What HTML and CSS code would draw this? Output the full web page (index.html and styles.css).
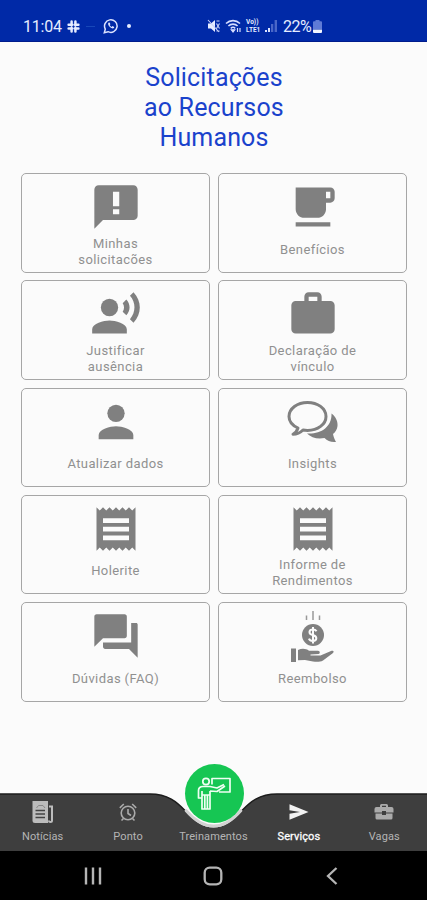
FILE: index.html
```html
<!DOCTYPE html>
<html lang="pt-BR">
<head>
<meta charset="utf-8">
<title>Solicitações ao Recursos Humanos</title>
<link rel="stylesheet" href="styles.css">
</head>
<body>
<div class="phone">
  <header class="status">
    <div class="status-left">
      <span class="clock">11:04</span>
      <svg class="slack" width="13" height="13" viewBox="0 0 13 13" stroke="#e6ecff" stroke-width="2.500" stroke-linecap="round"><path d="M4.600 1.600v3.600M8.400 1.600v3.600M4.600 7.800v3.600M8.400 7.800v3.600M1.600 4.700h3.600M7.800 4.700h3.600M1.600 8.400h3.600M7.800 8.400h3.600"/></svg>
      <span class="dash"></span>
      <svg width="16" height="16" viewBox="0 0 16 16" fill="none" stroke="#dce3ff" stroke-width="1.500"><path d="M1.300 14.700l1-3.600A6.300 6.300 0 1 1 5 13.700z"/><path d="M5.400 4.800c-.9 1.400.3 3.200 1.500 4.300 1.200 1.100 2.900 2 4.100 1l.2-1-1.700-1-.9.8C7.600 8.500 7 7.900 6.700 7.100l.7-.8-.8-1.700z" fill="#dce3ff" stroke="none"/></svg>
      <span class="dot"></span>
    </div>
    <div class="status-right">
      <svg width="14" height="14" viewBox="0 0 14 14" fill="#e6ecff"><path d="M1 4.500h3L8 1v12L4 9.500H1z"/><path d="M9.500 4.500l3 5M12.500 4.500l-3 5M9.500 2h3M9.500 12h3M1 1l11 12" stroke="#c8d2fa" stroke-width="1.100"/></svg>
      <svg class="wifi" width="17" height="14" viewBox="0 0 17 14" fill="none" stroke="#d5ddff" stroke-width="1.600"><path d="M1 4.500C5 .6 11 .6 15 4.500M3.400 7c2.600-2.500 6.600-2.500 9.200 0M5.800 9.300c1.300-1.200 3.100-1.200 4.400 0"/><path d="M8 13l-1.700-2.200h3.400zM12.500 9v4M15 9v4" fill="#d5ddff" stroke-width="1.200"/></svg>
      <span class="volte"><span>Vo))</span><span>LTE1</span></span>
      <svg width="13" height="14" viewBox="0 0 13 14"><path d="M0 13h2v-2H0zM3 13h2V9H3z" fill="#dce3ff"/><path d="M6 13h2.300V5H6zM9.600 13H12V1H9.600z" fill="#4a67c8"/></svg>
      <span class="percent">22%</span>
      <svg width="9" height="13" viewBox="0 0 9 13"><path d="M2.500 0h4v1.200H8q1 0 1 1V9H0V2.200q0-1 1-1h1.500z" fill="#5f7bd6"/><path d="M0 9.500h9V12q0 1-1 1H1q-1 0-1-1z" fill="#f2f5ff"/></svg>
    </div>
  </header>

  <main class="content">
    <h1 class="title">Solicitações<br>ao Recursos<br>Humanos</h1>
    <div class="grid">
      <div class="card">
        <svg class="icon" viewBox="0 0 24 24"><path fill-rule="evenodd" d="M20 2H4c-1.100 0-2 .9-2 2v18l4-4h14c1.100 0 2-.9 2-2V4c0-1.100-.9-2-2-2zM10.600 5v6.600h2.900V5zM10.600 13v2.300h2.900V13z"/></svg>
        <span class="label two">Minhas<br>solicitacões</span>
      </div>
      <div class="card">
        <svg class="icon" viewBox="0 0 24 24"><path d="M20 3H4v10c0 2.210 1.790 4 4 4h6c2.210 0 4-1.790 4-4v-3h2c1.110 0 2-.89 2-2V5c0-1.110-.89-2-2-2zm0 5h-2V5h2v3zM4 21h16v-2H4v2z"/></svg>
        <span class="label">Benefícios</span>
      </div>
      <div class="card">
        <svg class="icon" viewBox="0 0 24 24"><circle cx="9" cy="9" r="4"/><path d="M16.760 5.360l-1.680 1.690c.84 1.180.84 2.710 0 3.890l1.680 1.690c2.020-2.020 2.020-5.070 0-7.270zM20.070 2l-1.630 1.630c2.770 3.020 2.770 7.560 0 10.740L20.070 16c3.900-3.890 3.910-9.950 0-14zM9 15c-2.670 0-8 1.340-8 4v2h16v-2c0-2.660-5.330-4-8-4z"/></svg>
        <span class="label two">Justificar<br>ausência</span>
      </div>
      <div class="card">
        <svg class="icon" viewBox="0 0 24 24"><path d="M20 6h-4V4c0-1.110-.89-2-2-2h-4c-1.110 0-2 .89-2 2v2H4c-1.110 0-2 .89-2 2v11c0 1.110.89 2 2 2h16c1.110 0 2-.89 2-2V8c0-1.110-.89-2-2-2zm-6 0h-4V4h4v2z"/></svg>
        <span class="label two">Declaração de<br>vínculo</span>
      </div>
      <div class="card">
        <svg class="icon" viewBox="0 0 24 24"><circle cx="12" cy="8" r="4"/><path d="M12 14c-2.670 0-8 1.340-8 4v2h16v-2c0-2.660-5.330-4-8-4z"/></svg>
        <span class="label">Atualizar dados</span>
      </div>
      <div class="card">
        <svg class="icon" viewBox="0 0 52 52"><path d="M11 32C10 35 8.500 37 6 38.300c4 0 7.500-1.800 10-4.300q2 .4 4.500.4c10.200 0 18.500-6 18.500-14s-8.300-14-18.500-14S2 12.500 2 20.400c0 4.800 3.500 9 9 11.600z" fill="none" stroke="#808080" stroke-width="3" stroke-linejoin="round"/><path d="M44.500 17.500c4.500 3.500 6.500 8 6 12.500-.4 3.500-2 6-4.500 8 .5 3 1.500 5 3 8-5 .5-8.500-1-11.500-4-7 1.500-13.500-.5-17.500-4.500C33 38.500 45 31.500 44.500 17.500z"/></svg>
        <span class="label">Insights</span>
      </div>
      <div class="card">
        <svg class="icon" viewBox="0 0 24 24"><path d="M18 17.200H6V15h12v2.200zm0-4H6V11h12v2.200zm0-4H6V7h12v2.200zM3 22l1.500-1.500L6 22l1.500-1.500L9 22l1.500-1.500L12 22l1.500-1.500L15 22l1.500-1.500L18 22l1.500-1.500L21 22V2l-1.500 1.500L18 2l-1.500 1.500L15 2l-1.500 1.500L12 2l-1.500 1.500L9 2 7.500 3.500 6 2 4.500 3.500 3 2z"/></svg>
        <span class="label">Holerite</span>
      </div>
      <div class="card">
        <svg class="icon" viewBox="0 0 24 24"><path d="M18 17.200H6V15h12v2.200zm0-4H6V11h12v2.200zm0-4H6V7h12v2.200zM3 22l1.500-1.500L6 22l1.500-1.500L9 22l1.500-1.500L12 22l1.500-1.500L15 22l1.500-1.500L18 22l1.500-1.500L21 22V2l-1.500 1.500L18 2l-1.500 1.500L15 2l-1.500 1.500L12 2l-1.500 1.500L9 2 7.500 3.500 6 2 4.500 3.500 3 2z"/></svg>
        <span class="label two">Informe de<br>Rendimentos</span>
      </div>
      <div class="card">
        <svg class="icon" viewBox="0 0 24 24"><path d="M21.300 6H19v9H6v2c0 .55.45 1 1 1h11l4 4V6.700c0-.4-.3-.7-.7-.7zM17 12V3c0-.55-.45-1-1-1H3c-.55 0-1 .45-1 1v14l4-4h10c.55 0 1-.45 1-1z"/></svg>
        <span class="label">Dúvidas (FAQ)</span>
      </div>
      <div class="card">
        <svg class="icon" viewBox="0 0 52 52"><path d="M19.500 5.500v4.500M26 1v9M32.500 5.500v4.500" stroke="#999" stroke-width="1.500"/><circle cx="26" cy="25" r="11"/><path d="M29.500 21.300c-.7-1.300-2-1.900-3.500-1.900-4.500 0-4.700 4.600-.5 5.500 5.200 1 4.900 6 .3 6-1.800 0-3.300-.8-3.900-2.300M26 17v16.500" fill="none" stroke="#fbfbfb" stroke-width="2"/><path d="M4 38.500h5v13.500H4zM11 40c4-2 8-1.500 11 .7h9c2 0 2.500 2.800.5 3.200l-8 .5v1l10 .2L44 41c2-.9 3.500.4 2 1.900L36 50.500c-3 1.700-7 1.500-10 1l-8-1.500-7 .3z"/></svg>
        <span class="label">Reembolso</span>
      </div>
    </div>
  </main>

  <nav class="tabs">
    <svg class="tabs-bg" width="427" height="58" viewBox="0 0 427 58"><path d="M0 1H150C169 1 178 10 186 18.500 195 29 203 34.500 213.500 34.500S232 29 241 18.500C249 10 258 1 277 1H427V58H0z" fill="#3e3e3e"/><path d="M0 1H150C168 1 177 9 185 17.500M242 17.500C250 9 259 1 277 1H427" fill="none" stroke="#1c1c1c" stroke-width="1.500"/><path d="M186 17.500C195 28 203 33 213.500 33S232 28 241 17.500" fill="none" stroke="#d2d2d2" stroke-width="2.800" stroke-linecap="round"/></svg>
    <div class="fab">
      <svg width="36" height="36" viewBox="0 0 36 36" fill="none" stroke="#effff3" stroke-width="1.700" stroke-linejoin="round"><circle cx="10" cy="5.500" r="3.200"/><path d="M16 8.500V2.500h18v13.500H23M7 10.500h7l7 1.500 7-3.500M14 15l7 .5 8-5.500M7 10.500c-3 0-4.500 1.500-4.500 4v7.500h3.500v11h8V15M6 15v7M8.800 19v14M11.400 19v14M6 19h8"/></svg>
    </div>
    <div class="tab">
      <svg width="24" height="24" viewBox="0 0 24 24"><path d="M1.500 1h15.500v22H4q-2.500 0-2.500-2.500z" fill="#bcbcbc"/><path d="M18 6.500H21V20.500q0 1.500-1.500 1.500T18 20.500" fill="none" stroke="#bcbcbc" stroke-width="2"/><path d="M4.500 10.500h9.500M4.500 14h9.500M4.500 17.500h9.500" stroke="#444" stroke-width="1.300"/><path d="M5.500 8l2-2.500h4.500L14 8" fill="none" stroke="#888"/></svg>
      <span>Notícias</span>
    </div>
    <div class="tab">
      <svg width="20" height="20" viewBox="0 0 20 20" fill="none" stroke="#aaa" stroke-width="1.600"><circle cx="10" cy="11" r="6.800"/><path d="M10 7v4.500l3 2M1.800 5.800L5.800 2M14.200 2l4 3.800M5.500 16.500l-2 2M14.500 16.500l2 2"/></svg>
      <span>Ponto</span>
    </div>
    <div class="tab"><span>Treinamentos</span></div>
    <div class="tab active">
      <svg width="24" height="20" viewBox="0 0 24 20"><path d="M2.500 2.300L21.500 10l-19 7.700v-6L13 10 2.500 8.300z" fill="#f2f2f2"/></svg>
      <span>Serviços</span>
    </div>
    <div class="tab">
      <svg width="20" height="20" viewBox="0 0 20 20" fill="#aaa"><path fill-rule="evenodd" d="M6 5V3.500Q6 2 7.500 2h5Q14 2 14 3.500V5h3.500Q19.500 5 19.500 7v3.500H12V9H8v1.500H.5V7q0-2 2-2zm2 0h4V3.800H8z"/><path d="M1.500 11.500H8V13h4v-1.500h6.500V16q0 1.500-1.500 1.500H3Q1.500 17.500 1.500 16z"/></svg>
      <span>Vagas</span>
    </div>
  </nav>

  <footer class="system">
    <svg width="20" height="20" viewBox="0 0 20 20" stroke="#b5b5b5" stroke-width="2.400"><path d="M3 1.500v17M10 1.500v17M17 1.500v17"/></svg>
    <svg width="20" height="20" viewBox="0 0 20 20" fill="none" stroke="#b5b5b5" stroke-width="2.300"><rect x="1.700" y="1.700" width="16.600" height="16.600" rx="5"/></svg>
    <svg width="20" height="20" viewBox="0 0 20 20" fill="none" stroke="#b5b5b5" stroke-width="2.300"><path d="M14.500 2L6 10l8.500 8"/></svg>
  </footer>
</div>
</body>
</html>
```
FILE: styles.css
```css
* { box-sizing: border-box; }

body {
  margin: 0;
  background: #fbfbfb;
  font-family: Roboto, "Liberation Sans", sans-serif;
}

svg { display: block; flex: none; }

.phone {
  width: 427px;
  height: 900px;
  display: flex;
  flex-direction: column;
  overflow: hidden;
}

.status {
  height: 42px;
  flex: none;
  background: #0029a7;
  border-bottom: 1px solid #001c8c;
  color: #e6ecff;
  display: flex;
  padding: 11px 105px 0 23px;
  justify-content: space-between;
}

.status-left, .status-right {
  display: flex;
  align-items: center;
  height: 31px;
  padding-bottom: 1px;
}

.clock { font-size: 16px; width: 39px; letter-spacing: -0.2px; }
.slack { margin-left: 5px; }
.dash { width: 9px; height: 1px; background: #1747b8; margin: 0 8px 0 6px; }
.dot { width: 4px; height: 4px; border-radius: 50%; background: #e6ecff; margin-left: 8px; }

.wifi { margin-left: 4px; }

.volte {
  display: flex;
  flex-direction: column;
  font-size: 6.500px;
  font-weight: 700;
  line-height: 8px;
  width: 16px;
  margin: 0 3px 0 4px;
}

.percent { font-size: 16px; letter-spacing: -0.6px; margin: 0 2px 0 5px; }

.content { flex: 1; padding: 21px 20px 0 21px; }

.title {
  margin: 0 0 20px;
  text-align: center;
  font-size: 25px;
  font-weight: 400;
  line-height: 30px;
  letter-spacing: 0.15px;
  color: #1a42cc;
}

.grid {
  display: grid;
  grid-template-columns: 1fr 1fr;
  grid-auto-rows: 99.600px;
  gap: 7.700px 8px;
}

.card {
  border: 1px solid #a6a6a6;
  border-radius: 5px;
  display: flex;
  flex-direction: column;
  align-items: center;
  padding-top: 7px;
}

.icon { width: 52px; height: 52px; fill: #808080; }

.label {
  margin-top: 8.600px;
  font-size: 13px;
  line-height: 16px;
  letter-spacing: 0.4px;
  color: #909090;
  text-align: center;
}

.two { margin-top: 2.600px; }

.tabs {
  position: relative;
  flex: none;
  height: 58px;
  display: grid;
  grid-template-columns: repeat(5, 1fr);
}

.tabs-bg { position: absolute; left: 0; top: 0; }

.fab {
  position: absolute;
  left: 184.500px;
  top: -29px;
  width: 59px;
  height: 59px;
  border-radius: 50%;
  background: #16c653;
  display: flex;
  align-items: center;
  justify-content: center;
}

.tab {
  position: relative;
  display: flex;
  flex-direction: column;
  align-items: center;
  justify-content: flex-end;
  padding-bottom: 8px;
  color: #b5b5b5;
  font-size: 11px;
  line-height: 13px;
  letter-spacing: 0.1px;
}

.tab svg { margin: auto 0; }
.active { color: #fff; }
.active span { -webkit-text-stroke: 0.3px #fff; }

.system {
  height: 49px;
  flex: none;
  background: #000;
  display: flex;
  justify-content: space-between;
  align-items: center;
  padding: 0 85px 0 83px;
}
```
